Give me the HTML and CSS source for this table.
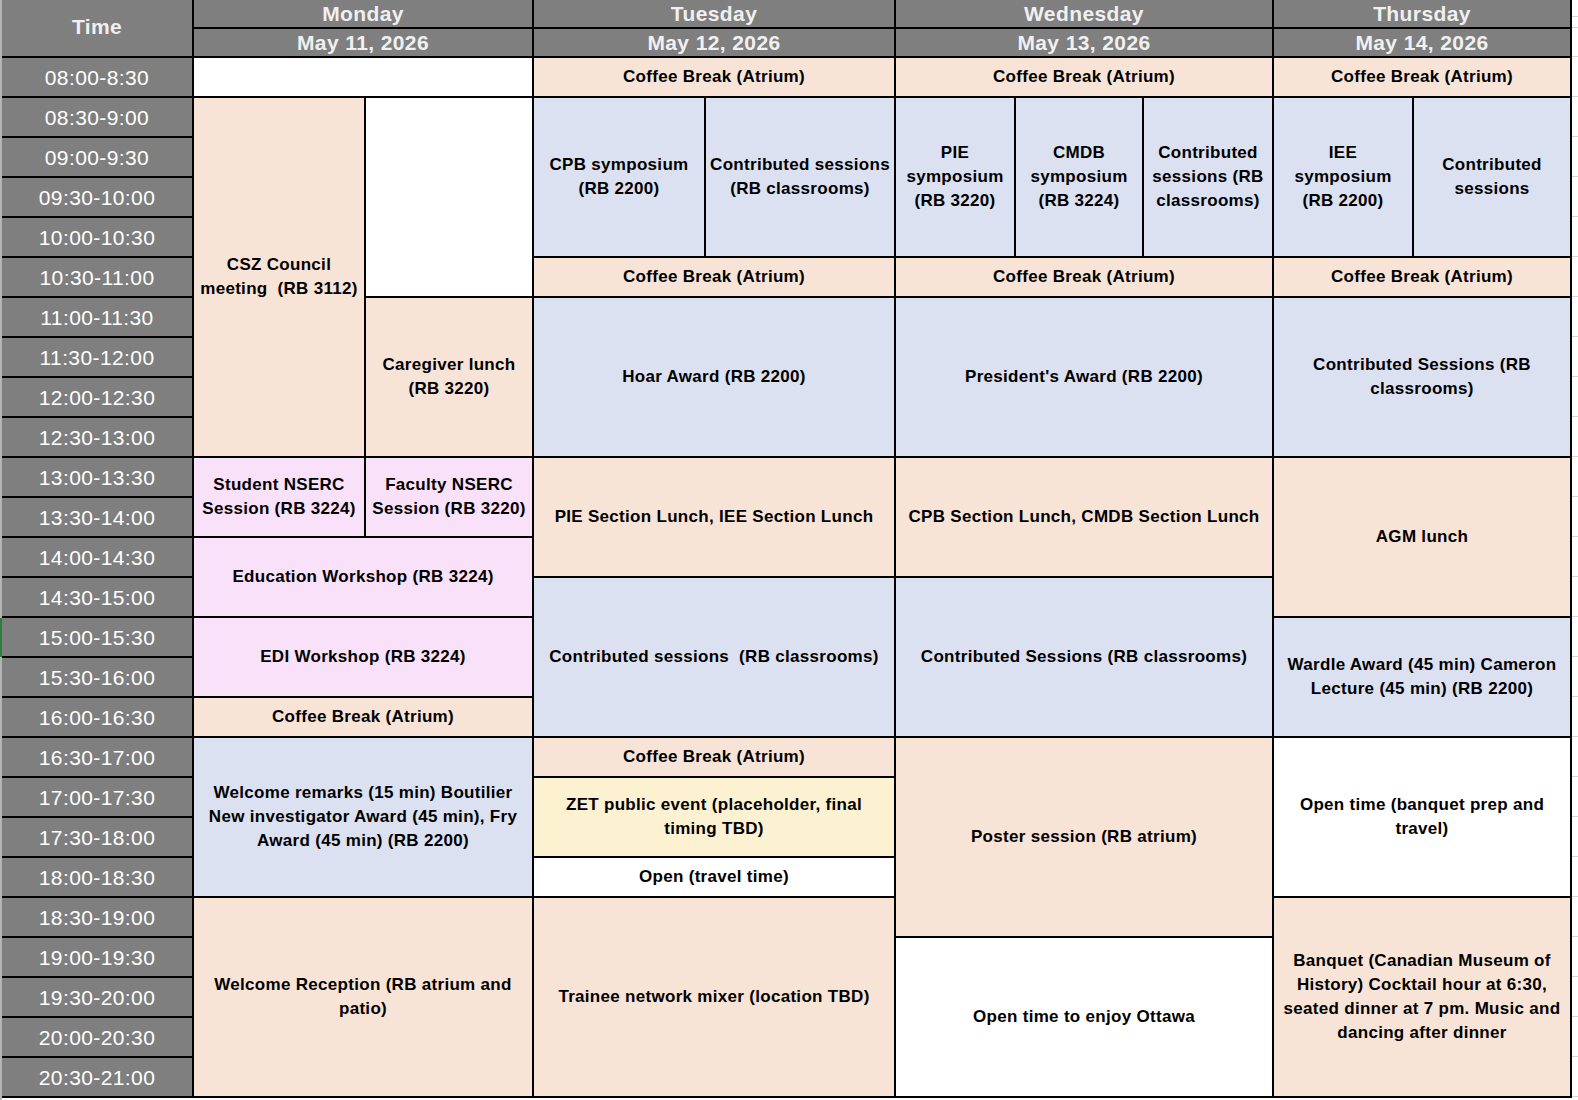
FILE: index.html
```html
<!DOCTYPE html>
<html lang="en">
<head>
<meta charset="utf-8">
<title>Conference Schedule</title>
<link rel="stylesheet" href="styles.css">
</head>
<body>
<div class="page">
  <div class="strip"><div class="strip-top"></div><div class="strip-mark"></div></div>
  <div class="sheet">
    <div class="hd time-hd">Time</div>
    <div class="hd day c-m">Monday</div>
    <div class="hd date c-m">May 11, 2026</div>
    <div class="hd day c-t">Tuesday</div>
    <div class="hd date c-t">May 12, 2026</div>
    <div class="hd day c-w">Wednesday</div>
    <div class="hd date c-w">May 13, 2026</div>
    <div class="hd day c-h">Thursday</div>
    <div class="hd date c-h">May 14, 2026</div>

    <div class="times">
      <div class="tm">08:00-8:30</div>
      <div class="tm">08:30-9:00</div>
      <div class="tm">09:00-9:30</div>
      <div class="tm">09:30-10:00</div>
      <div class="tm">10:00-10:30</div>
      <div class="tm">10:30-11:00</div>
      <div class="tm">11:00-11:30</div>
      <div class="tm">11:30-12:00</div>
      <div class="tm">12:00-12:30</div>
      <div class="tm">12:30-13:00</div>
      <div class="tm">13:00-13:30</div>
      <div class="tm">13:30-14:00</div>
      <div class="tm">14:00-14:30</div>
      <div class="tm">14:30-15:00</div>
      <div class="tm">15:00-15:30</div>
      <div class="tm">15:30-16:00</div>
      <div class="tm">16:00-16:30</div>
      <div class="tm">16:30-17:00</div>
      <div class="tm">17:00-17:30</div>
      <div class="tm">17:30-18:00</div>
      <div class="tm">18:00-18:30</div>
      <div class="tm">18:30-19:00</div>
      <div class="tm">19:00-19:30</div>
      <div class="tm">19:30-20:00</div>
      <div class="tm">20:00-20:30</div>
      <div class="tm">20:30-21:00</div>
    </div>

    <!-- Monday -->
    <div class="ev white c-m at0 len1"></div>
    <div class="ev peach c-m1 at1 len9">CSZ Council<br>meeting&nbsp; (RB 3112)</div>
    <div class="ev white c-m2 at1 len5"></div>
    <div class="ev peach c-m2 at6 len4">Caregiver lunch<br>(RB 3220)</div>
    <div class="ev pink c-m1 at10 len2">Student NSERC<br>Session (RB 3224)</div>
    <div class="ev pink c-m2 at10 len2">Faculty NSERC<br>Session (RB 3220)</div>
    <div class="ev pink c-m at12 len2">Education Workshop (RB 3224)</div>
    <div class="ev pink c-m at14 len2">EDI Workshop (RB 3224)</div>
    <div class="ev peach c-m at16 len1">Coffee Break (Atrium)</div>
    <div class="ev blue c-m at17 len4">Welcome remarks (15 min) Boutilier<br>New investigator Award (45 min), Fry<br>Award (45 min) (RB 2200)</div>
    <div class="ev peach c-m at21 len5">Welcome Reception (RB atrium and<br>patio)</div>

    <!-- Tuesday -->
    <div class="ev peach c-t at0 len1">Coffee Break (Atrium)</div>
    <div class="ev blue c-t1 at1 len4">CPB symposium<br>(RB 2200)</div>
    <div class="ev blue c-t2 at1 len4">Contributed sessions<br>(RB classrooms)</div>
    <div class="ev peach c-t at5 len1">Coffee Break (Atrium)</div>
    <div class="ev blue c-t at6 len4">Hoar Award (RB 2200)</div>
    <div class="ev peach c-t at10 len3">PIE Section Lunch, IEE Section Lunch</div>
    <div class="ev blue c-t at13 len4">Contributed sessions&nbsp; (RB classrooms)</div>
    <div class="ev peach c-t at17 len1">Coffee Break (Atrium)</div>
    <div class="ev yellow c-t at18 len2">ZET public event (placeholder, final<br>timing TBD)</div>
    <div class="ev white c-t at20 len1">Open (travel time)</div>
    <div class="ev peach c-t at21 len5">Trainee network mixer (location TBD)</div>

    <!-- Wednesday -->
    <div class="ev peach c-w at0 len1">Coffee Break (Atrium)</div>
    <div class="ev blue c-w1 at1 len4">PIE<br>symposium<br>(RB 3220)</div>
    <div class="ev blue c-w2 at1 len4">CMDB<br>symposium<br>(RB 3224)</div>
    <div class="ev blue c-w3 at1 len4">Contributed<br>sessions (RB<br>classrooms)</div>
    <div class="ev peach c-w at5 len1">Coffee Break (Atrium)</div>
    <div class="ev blue c-w at6 len4">President's Award (RB 2200)</div>
    <div class="ev peach c-w at10 len3">CPB Section Lunch, CMDB Section Lunch</div>
    <div class="ev blue c-w at13 len4">Contributed Sessions (RB classrooms)</div>
    <div class="ev peach c-w at17 len5">Poster session (RB atrium)</div>
    <div class="ev white c-w at22 len4">Open time to enjoy Ottawa</div>

    <!-- Thursday -->
    <div class="ev peach c-h at0 len1">Coffee Break (Atrium)</div>
    <div class="ev blue c-h1 at1 len4">IEE<br>symposium<br>(RB 2200)</div>
    <div class="ev blue c-h2 at1 len4">Contributed<br>sessions</div>
    <div class="ev peach c-h at5 len1">Coffee Break (Atrium)</div>
    <div class="ev blue c-h at6 len4">Contributed Sessions (RB<br>classrooms)</div>
    <div class="ev peach c-h at10 len4">AGM lunch</div>
    <div class="ev blue c-h at14 len3">Wardle Award (45 min) Cameron<br>Lecture (45 min) (RB 2200)</div>
    <div class="ev white c-h at17 len4">Open time (banquet prep and<br>travel)</div>
    <div class="ev peach c-h at21 len5">Banquet (Canadian Museum of<br>History) Cocktail hour at 6:30,<br>seated dinner at 7 pm. Music and<br>dancing after dinner</div>
  </div>
  <div class="filler"></div>
</div>
</body>
</html>
```

FILE: styles.css
```css
* {
  box-sizing: border-box;
}

html, body {
  margin: 0;
  padding: 0;
  background: #ffffff;
}

body {
  font-family: "Liberation Sans", Arial, Helvetica, sans-serif;
  color: #000;
}

.page {
  display: flex;
  width: 1578px;
  height: 1100px;
  overflow: hidden;
}

.strip {
  width: 2px;
  flex: 0 0 2px;
  display: flex;
  flex-direction: column;
  background: #b4b4b4;
}

.strip-top {
  height: 618px;
}

.strip-mark {
  height: 39px;
  background: #2f7d3d;
}

.sheet {
  flex: 0 0 auto;
  align-self: flex-start;
  display: grid;
  grid-template-columns: 190px 170px 166px 170px 188px 118px 126px 128px 138px 156px;
  grid-template-rows: 27px 27px repeat(26, 38px);
  gap: 2px;
  padding: 0 2px 2px 0;
  background: #000;
}

.filler {
  flex: 1 1 auto;
  background-image:
    linear-gradient(to bottom, transparent 27px, #d6d6d6 27px, #d6d6d6 28px, transparent 28px),
    repeating-linear-gradient(to bottom, transparent 0, transparent 16px, #d6d6d6 16px, #d6d6d6 17px, transparent 17px, transparent 40px);
}

/* header */
.hd {
  background: #7f7f7f;
  color: #f0f0f0;
  font-weight: bold;
  font-size: 21px;
  letter-spacing: 0.4px;
  display: flex;
  align-items: center;
  justify-content: center;
  white-space: nowrap;
}

.time-hd {
  grid-column: 1;
  grid-row: 1 / span 2;
  padding-bottom: 2px;
}

.day {
  grid-row: 1;
  line-height: 27px;
}

.date {
  grid-row: 2;
  line-height: 27px;
}

/* time column */
.times {
  grid-column: 1;
  grid-row: 3 / span 26;
  display: grid;
  grid-template-rows: repeat(26, 38px);
  gap: 2px;
  background: #000;
}

.tm {
  background: #7f7f7f;
  color: #ffffff;
  font-size: 21px;
  letter-spacing: 0.4px;
  display: flex;
  align-items: center;
  justify-content: center;
  padding-top: 2px;
}

/* event cells */
.ev {
  display: flex;
  align-items: center;
  justify-content: center;
  text-align: center;
  font-weight: bold;
  font-size: 17px;
  line-height: 24px;
  letter-spacing: 0.3px;
  padding: 0 1px;
}

.peach { background: #f7e4d7; }
.blue { background: #dbe1f1; }
.pink { background: #f9e1f9; }
.yellow { background: #fcf2d2; }
.white { background: #ffffff; }

/* columns */
.c-m { grid-column: 2 / span 2; }
.c-m1 { grid-column: 2; }
.c-m2 { grid-column: 3; }
.c-t { grid-column: 4 / span 2; }
.c-t1 { grid-column: 4; }
.c-t2 { grid-column: 5; }
.c-w { grid-column: 6 / span 3; }
.c-w1 { grid-column: 6; }
.c-w2 { grid-column: 7; }
.c-w3 { grid-column: 8; }
.c-h { grid-column: 9 / span 2; }
.c-h1 { grid-column: 9; }
.c-h2 { grid-column: 10; }

/* row start (slot index) */
.at0 { grid-row-start: 3; }
.at1 { grid-row-start: 4; }
.at5 { grid-row-start: 8; }
.at6 { grid-row-start: 9; }
.at10 { grid-row-start: 13; }
.at12 { grid-row-start: 15; }
.at13 { grid-row-start: 16; }
.at14 { grid-row-start: 17; }
.at16 { grid-row-start: 19; }
.at17 { grid-row-start: 20; }
.at18 { grid-row-start: 21; }
.at20 { grid-row-start: 23; }
.at21 { grid-row-start: 24; }
.at22 { grid-row-start: 25; }

/* row span */
.len1 { grid-row-end: span 1; }
.len2 { grid-row-end: span 2; }
.len3 { grid-row-end: span 3; }
.len4 { grid-row-end: span 4; }
.len5 { grid-row-end: span 5; }
.len9 { grid-row-end: span 9; }
```
